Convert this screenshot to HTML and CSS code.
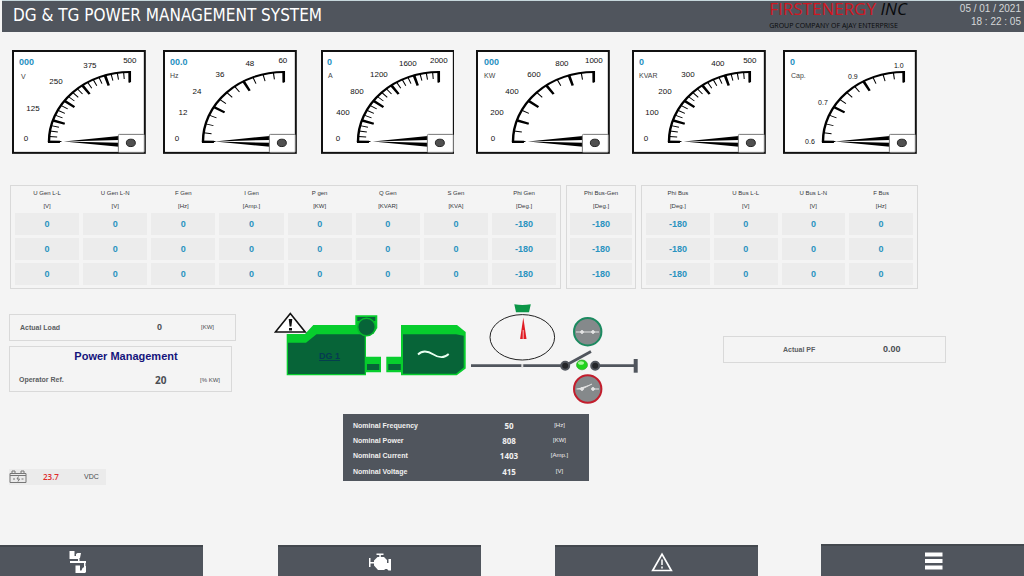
FILE: index.html
```html
<!DOCTYPE html>
<html lang="en">
<head>
<meta charset="utf-8">
<title>DG &amp; TG Power Management System</title>
<link rel="stylesheet" href="styles.css">
</head>
<body>
<svg class="defs" aria-hidden="true">
  <defs>
    <path id="arc" d="M-81 0A81 81 0 0 1 0 -81" pathLength="90"/>
    <path id="minor-arc" d="M-77 0A77 77 0 0 1 0 -77" pathLength="90"/>
    <path id="major-arc" d="M-75 0A75 75 0 0 1 0 -75" pathLength="90"/>
    <g id="ends"><use href="#arc" class="rim"/><path class="end" d="M-82 0h12M0 -82v13"/></g>
    <g id="dial-fine"><use href="#ends"/><use href="#minor-arc" class="minor m20"/><use href="#major-arc" class="major j5"/></g>
    <g id="dial-coarse"><use href="#ends"/><use href="#minor-arc" class="minor m10"/><use href="#major-arc" class="major j5"/></g>
    <g id="dial-thirds"><use href="#ends"/><use href="#minor-arc" class="minor m12"/><use href="#major-arc" class="major j3"/></g>
    <g id="needle">
      <path d="M52 91.500L107 86v4z"/><path d="M52 91.500L107 93v4z"/>
      <rect class="hub" x="106.500" y="84.500" width="26" height="18" rx="1"/>
      <ellipse class="pin" cx="119" cy="93" rx="4.500" ry="3.700"/>
    </g>
  </defs>
</svg>

<header class="topbar">
  <h1>DG &amp; TG POWER MANAGEMENT SYSTEM</h1>
  <div class="brand"><p class="brand-name">FIRSTENERGY <i>INC</i></p><p class="brand-sub">GROUP COMPANY OF AJAY ENTERPRISE</p></div>
  <div class="clock"><time>05 / 01 / 2021</time><time>18 : 22 : 05</time></div>
</header>

<section class="gauges">
  <svg class="gauge" viewBox="0 0 134 104">
    <rect class="frame" x="1" y="1" width="132" height="102"/>
    <use href="#dial-fine" transform="translate(118 92) scale(1 .864)"/><use href="#needle"/>
    <text class="reading" x="7" y="15">000</text><text class="unit" x="9" y="29">V</text>
    <g class="marks"><text x="118" y="13">500</text><text x="78" y="18">375</text><text x="44" y="34">250</text><text x="21" y="61">125</text><text x="14" y="91">0</text></g>
  </svg>
  <svg class="gauge" viewBox="0 0 134 104">
    <rect class="frame" x="1" y="1" width="132" height="102"/>
    <use href="#dial-thirds" transform="translate(121 92) scale(1 .864)"/><use href="#needle"/>
    <text class="reading" x="7" y="15">00.0</text><text class="unit" x="7" y="28">Hz</text>
    <g class="marks"><text x="120" y="13">60</text><text x="87" y="16">48</text><text x="57" y="27">36</text><text x="34" y="44">24</text><text x="20" y="65">12</text><text x="14" y="91">0</text></g>
  </svg>
  <svg class="gauge" viewBox="0 0 134 104">
    <rect class="frame" x="1" y="1" width="132" height="102"/>
    <use href="#dial-fine" transform="translate(118 92) scale(1 .864)"/><use href="#needle"/>
    <text class="reading" x="6" y="15">0</text><text class="unit" x="7" y="28">A</text>
    <g class="marks"><text x="118" y="13">2000</text><text x="87" y="16">1600</text><text x="58" y="27">1200</text><text x="36" y="44">800</text><text x="22" y="65">400</text><text x="17" y="91">0</text></g>
  </svg>
  <svg class="gauge" viewBox="0 0 134 104">
    <rect class="frame" x="1" y="1" width="132" height="102"/>
    <use href="#dial-coarse" transform="translate(118 92) scale(1 .864)"/><use href="#needle"/>
    <text class="reading" x="8" y="15">000</text><text class="unit" x="8" y="28">KW</text>
    <g class="marks"><text x="118" y="13">1000</text><text x="86" y="16">800</text><text x="58" y="27">600</text><text x="36" y="44">400</text><text x="21" y="65">200</text><text x="17" y="91">0</text></g>
  </svg>
  <svg class="gauge" viewBox="0 0 134 104">
    <rect class="frame" x="1" y="1" width="132" height="102"/>
    <use href="#dial-fine" transform="translate(118 92) scale(1 .864)"/><use href="#needle"/>
    <text class="reading" x="7" y="15">0</text><text class="unit" x="7" y="28">KVAR</text>
    <g class="marks"><text x="118" y="13">500</text><text x="86" y="16">400</text><text x="56" y="27">300</text><text x="33" y="44">200</text><text x="20" y="65">100</text><text x="14" y="91">0</text></g>
  </svg>
  <svg class="gauge" viewBox="0 0 134 104">
    <rect class="frame" x="1" y="1" width="132" height="102"/>
    <use href="#dial-thirds" transform="translate(121 92) scale(1 .864)"/><use href="#needle"/>
    <text class="reading" x="7" y="15">0</text><text class="unit" x="8" y="28">Cap.</text>
    <g class="marks small"><text x="116" y="18">1.0</text><text x="70" y="29">0.9</text><text x="40" y="55">0.7</text><text x="27" y="94">0.6</text></g>
  </svg>
</section>

<section class="tables">
  <table class="readings gen">
    <thead><tr><th>U Gen L-L<span>[V]</span></th><th>U Gen L-N<span>[V]</span></th><th>F Gen<span>[Hz]</span></th><th>I Gen<span>[Amp.]</span></th><th>P gen<span>[KW]</span></th><th>Q Gen<span>[KVAR]</span></th><th>S Gen<span>[KVA]</span></th><th>Phi Gen<span>[Deg.]</span></th></tr></thead>
    <tbody>
      <tr><td>0</td><td>0</td><td>0</td><td>0</td><td>0</td><td>0</td><td>0</td><td>-180</td></tr>
      <tr><td>0</td><td>0</td><td>0</td><td>0</td><td>0</td><td>0</td><td>0</td><td>-180</td></tr>
      <tr><td>0</td><td>0</td><td>0</td><td>0</td><td>0</td><td>0</td><td>0</td><td>-180</td></tr>
    </tbody>
  </table>
  <table class="readings link">
    <thead><tr><th>Phi Bus-Gen<span>[Deg.]</span></th></tr></thead>
    <tbody><tr><td>-180</td></tr><tr><td>-180</td></tr><tr><td>-180</td></tr></tbody>
  </table>
  <table class="readings bus">
    <thead><tr><th>Phi Bus<span>[Deg.]</span></th><th>U Bus L-L<span>[V]</span></th><th>U Bus L-N<span>[V]</span></th><th>F Bus<span>[Hz]</span></th></tr></thead>
    <tbody>
      <tr><td>-180</td><td>0</td><td>0</td><td>0</td></tr>
      <tr><td>-180</td><td>0</td><td>0</td><td>0</td></tr>
      <tr><td>-180</td><td>0</td><td>0</td><td>0</td></tr>
    </tbody>
  </table>
</section>

<main class="overview">
  <section class="left">
    <div class="box load"><span class="label">Actual Load</span><b>0</b><span class="tiny">[KW]</span></div>
    <div class="box manage">
      <h2>Power Management</h2>
      <div class="field"><span class="label">Operator Ref.</span><b class="ref">20</b><span class="tiny">[% KW]</span></div>
    </div>
    <div class="battery">
      <svg width="18" height="14" viewBox="0 0 18 14"><path d="M1 3.500h16v9H1zM1 5.500h16M3 3V1h3v2M12 3V1h3v2M4 9h2M12.500 9h2M9.500 6.500L8 9h2.500L9 11.500" fill="none" stroke="#777"/></svg>
      <span class="volts">23.7</span><span class="vdc">VDC</span>
    </div>
  </section>

  <section class="center">
    <svg class="diagram" viewBox="0 0 366 102">
      <g fill="#07cd2d">
        <path d="M12.700 31H31L39.300 22H92V72.300H12.700z"/>
        <path d="M81.300 12.300h22V25l-4 6h-14l-4-6z"/>
        <path d="M92 53.700h15v15.600H92zM112.300 53.700h15.500v15.600h-15.500z"/>
        <path d="M127 22h56l8.700 7v36.500l-9 6.800H127z"/>
      </g>
      <g fill="#076438">
        <path d="M14 39.700H32L42.500 31.300H90.700V71H14z"/>
        <path d="M83.300 14h18v4h-18z"/>
        <path d="M93 61h12.300v6H93zM114.300 61h12.500v6h-12.500z"/>
        <path d="M129 31.300h53l7.700 1.500V64.500L182 70.800h-53z"/>
        <circle cx="92.500" cy="24" r="8.800" stroke="#07b82c" stroke-width="1.500"/>
      </g>
      <text class="dg" x="45" y="56">DG 1</text>
      <path d="M144 51.500C149 46.500 154 48 159.500 51.500S170 55.500 174.700 51" fill="none" stroke="#e8fff0" stroke-width="1.800"/>
      <path d="M16.300 10.500L31.200 29H1.400z" fill="#fff" stroke="#111" stroke-width="1.600"/>
      <path d="M14.700 16h3.600l-.9 7.500h-1.800zM15 25h3v2.500h-3z" fill="#111"/>
      <path d="M240.300 1.200q8 1.600 16.500 0L255 9.300h-13z" fill="#0b9647"/>
      <ellipse cx="248.300" cy="34.300" rx="32.300" ry="22.700" fill="none" stroke="#222"/>
      <path d="M249.300 14.500L252.500 36h-6.400z" fill="#e01c24"/><path d="M249.200 27v9" stroke="#fff" stroke-width=".7"/>
      <g stroke="#50555d" stroke-width="2.800" fill="none"><path d="M197 62.700h94M321 62.700h39M291 62.700L317 48.500"/><path d="M361.700 56v13.700" stroke-width="4"/></g>
      <path d="M248.300 61v3.500" stroke="#ddd" stroke-width="2"/>
      <g fill="#242629" stroke="#50555d" stroke-width="2"><circle cx="291.200" cy="62.700" r="4"/><circle cx="321.200" cy="62.700" r="4"/></g>
      <ellipse cx="308" cy="61.900" rx="5.500" ry="4.900" fill="#20d41c" stroke="#39a52f" stroke-width=".7"/><ellipse cx="307" cy="60" rx="3" ry="1.800" fill="#a5f79a"/>
      <circle cx="313.700" cy="28.700" r="13.700" fill="#85898b" stroke="#1c8a60" stroke-width="2"/>
      <circle cx="313.700" cy="86" r="13.700" fill="#85898b" stroke="#c21d2c" stroke-width="2"/>
      <g stroke="#e4e4e4" fill="#e4e4e4"><path d="M302 29h23M302.500 86h5.500l10-5M319 86h6"/><circle cx="308" cy="29" r="1.400"/><circle cx="319" cy="29" r="1.400"/><circle cx="308" cy="86" r="1.400"/><circle cx="319" cy="86" r="1.400"/></g>
    </svg>
    <table class="nominal">
      <tr><th>Nominal Frequency</th><td class="num">50</td><td>[Hz]</td></tr>
      <tr><th>Nominal Power</th><td class="num">808</td><td>[KW]</td></tr>
      <tr><th>Nominal Current</th><td class="num">1403</td><td>[Amp.]</td></tr>
      <tr><th>Nominal Voltage</th><td class="num">415</td><td>[V]</td></tr>
    </table>
  </section>

  <section class="right">
    <div class="box pf"><span class="label">Actual PF</span><b>0.00</b></div>
  </section>
</main>

<nav class="tabs">
  <button class="tab mimic" aria-label="Single line"><svg width="18" height="24" viewBox="0 0 18 24" fill="#fff"><path d="M.5 1h5v5h1.500V4l1.500-1H12l-1 5-2.500 1H.5zM9 8.500h1.500V11H17v2H1v-2h8zM15 13h1.500v4H15zM6.500 15.500H11v5h1.500l1-2.500 3.500-2v6l-1 1H6.500z"/></svg></button>
  <button class="tab engine" aria-label="Engine"><svg width="24" height="18" viewBox="0 0 24 18" fill="#fff"><path d="M8.500.5h7V2h-2.700v2H16l3 3v3h1.500V6H23v11.500h-2.500L19 16h-1.500L16 17h-6l-4-4.500v-2H2.500V14H1V5h1.500v4H6V7.500L9.500 4h1.800V2H8.500z"/></svg></button>
  <button class="tab alarm" aria-label="Alarms"><svg width="22" height="20" viewBox="0 0 22 20"><path d="M11 2.200L20.300 18.500H1.700z" fill="none" stroke="#fff" stroke-width="1.700"/><path d="M11 7.500v5.500M11 14.500v2" stroke="#fff" stroke-width="1.500"/></svg></button>
  <button class="tab menu" aria-label="Menu"><svg width="18" height="18" viewBox="0 0 18 18" fill="#fff"><path d="M0 .5h17.500v4H0zM0 7h17.500v4H0zM0 13.500h17.500v4H0z"/></svg></button>
</nav>
</body>
</html>
```

FILE: styles.css
```css
* { box-sizing: border-box; }
body {
  margin: 0;
  min-height: 100vh;
  display: flex;
  flex-direction: column;
  background: #f4f4f4;
  color: #4a4d52;
  font-family: "Liberation Sans", Arial, sans-serif;
}
h1, h2, p { margin: 0; font-weight: normal; }
.defs { display: block; width: 0; height: 0; }

.topbar {
  display: grid;
  grid-template-columns: 757fr 160fr 92fr;
  height: 32px;
  margin-left: 2px;
  padding-left: 11px;
  padding-right: 3px;
  background: #50555d;
  border-top: 1px solid #c6d7dc;
  overflow: hidden;
}
.topbar h1 {
  font: 17px/29px "DejaVu Sans Condensed", "Open Sans", sans-serif;
  color: #fff;
}
.brand { color: #08090b; white-space: nowrap; font-family: "Open Sans", sans-serif; }
.brand-name { font-size: 17px; line-height: 16px; height: 20px; color: #d01722; }
.brand-name i { color: #08090b; }
.brand-sub { font-size: 7px; line-height: 10px; }
.clock { padding-top: 1px; text-align: right; font-size: 10px; line-height: 13px; color: #d5d7d9; white-space: nowrap; }
.clock time { display: block; }

.gauges { display: flex; padding: 18px 107px 0 12px; }
.gauge { display: block; flex: 1 1 0; min-width: 0; margin-left: 22px; }
.gauge:nth-child(1) { margin-left: 0; }
.gauge:nth-child(2), .gauge:nth-child(6) { margin-left: 17px; }
.gauge:nth-child(3) { margin-left: 24px; }
.frame { fill: #fff; stroke: #111; stroke-width: 2; }
.rim { fill: none; stroke: #000; stroke-width: 2.4; }
.end { fill: none; stroke: #000; stroke-width: 2.4; }
.minor, .major { fill: none; stroke: #000; }
.minor { stroke-width: 8; stroke-dashoffset: .4; }
.major { stroke-width: 13; stroke-dashoffset: 1; }
.m20 { stroke-dasharray: .8 3.7; }
.m10 { stroke-dasharray: .8 8.2; }
.m12 { stroke-dasharray: .8 6.7; }
.j5 { stroke-dasharray: 2 16; }
.j3 { stroke-dasharray: 2 28; }
.hub { fill: #fff; stroke: #777; stroke-width: 1; }
.pin { fill: #505050; stroke: #222; stroke-width: 1; }
.reading { font: bold 9px "Liberation Sans", sans-serif; fill: #1f8fc0; }
.unit { font-size: 7px; fill: #444; }
.marks { font-size: 8px; fill: #111; text-anchor: middle; }
.marks.small { font-size: 7px; }

.tables { display: flex; align-items: flex-start; padding: 31px 106px 0 10px; }
.readings {
  table-layout: fixed;
  border: 1px solid #d9d9d9;
  border-collapse: separate;
  border-spacing: 4px 3px;
  text-align: center;
}
.gen { width: 60.700%; margin-right: 5px; }
.link { width: 7.700%; margin-right: 5px; border-spacing: 3px; }
.bus { width: 30.500%; }
.readings th { height: 21px; padding: 0; font-size: 6px; line-height: 8px; font-weight: normal; color: #33363a; vertical-align: top; white-space: nowrap; }
.readings th span { display: block; margin-top: 5px; }
.readings td { height: 22px; padding: 0; background: #ececec; font-size: 9px; line-height: 12px; font-weight: bold; color: #2a93c0; }

.overview { display: grid; grid-template-columns: 265fr 449fr 301fr; padding: 14px 0 0 9px; }
.box { border: 1px solid #d9d9d9; }
.label { font-size: 7px; font-weight: bold; color: #5b5e62; white-space: nowrap; }
.tiny { font-size: 6px; white-space: nowrap; }
.left { padding-top: 11px; }
.load, .field { display: grid; grid-template-columns: 136px 45px 1fr; align-items: center; }
.load { width: 227px; height: 27px; padding-left: 10px; margin-bottom: 5px; }
.load b { font-size: 9px; line-height: 16px; padding-left: 1px; }
.manage { width: 223px; height: 46px; }
.manage h2 { font-size: 11px; line-height: 18px; font-weight: bold; text-align: center; color: #14147c; padding-left: 11px; }
.field { padding: 7px 0 0 9px; line-height: 16px; }
.field .ref { font: bold 10px/16px "Open Sans", sans-serif; }
.battery { display: grid; grid-template-columns: 34px 41px 1fr; align-items: center; width: 97px; height: 16px; margin-top: 77px; background: #ebebeb; }
.volts { font: 8px/14px "Open Sans", sans-serif; color: #e02b2b; font-weight: 600; }
.vdc { font-size: 7px; }

.diagram { display: block; width: 366px; height: 102px; }
.dg { font-size: 9px; font-weight: bold; fill: #063a52; text-decoration: underline; }
.nominal { width: 246px; height: 67px; margin: 9px 0 0 69px; padding: 4px 0 2px; border-collapse: separate; border-spacing: 0; background: #50555d; color: #f0f0f0; table-layout: fixed; }
.nominal th { width: 140px; height: 15px; padding: 0 0 0 10px; text-align: left; font-size: 7px; line-height: 15px; }
.nominal td { padding: 0 5px 0 0; text-align: center; font-size: 6px; line-height: 15px; }
.nominal .num { width: 52px; padding: 0; font: bold 8px/15px "Open Sans", sans-serif; }

.right { padding-top: 33px; }
.pf { display: grid; grid-template-columns: 100px 1fr; align-items: center; width: 223px; height: 27px; padding-left: 59px; }
.pf b { font-size: 9px; }

.tabs { display: grid; grid-template-columns: 203fr 75fr 203fr 74fr 203fr 63fr 203fr; align-items: end; margin-top: auto; }
.tab { display: flex; justify-content: center; align-items: center; height: 31px; padding: 0; border: 0; border-top: 2px solid #43484e; background: #50555d; }
.mimic { grid-column: 1; padding-right: 48px; }
.engine { grid-column: 3; }
.alarm { grid-column: 5; padding-left: 10px; }
.menu { grid-column: 7; height: 32px; padding-left: 22px; }
```
